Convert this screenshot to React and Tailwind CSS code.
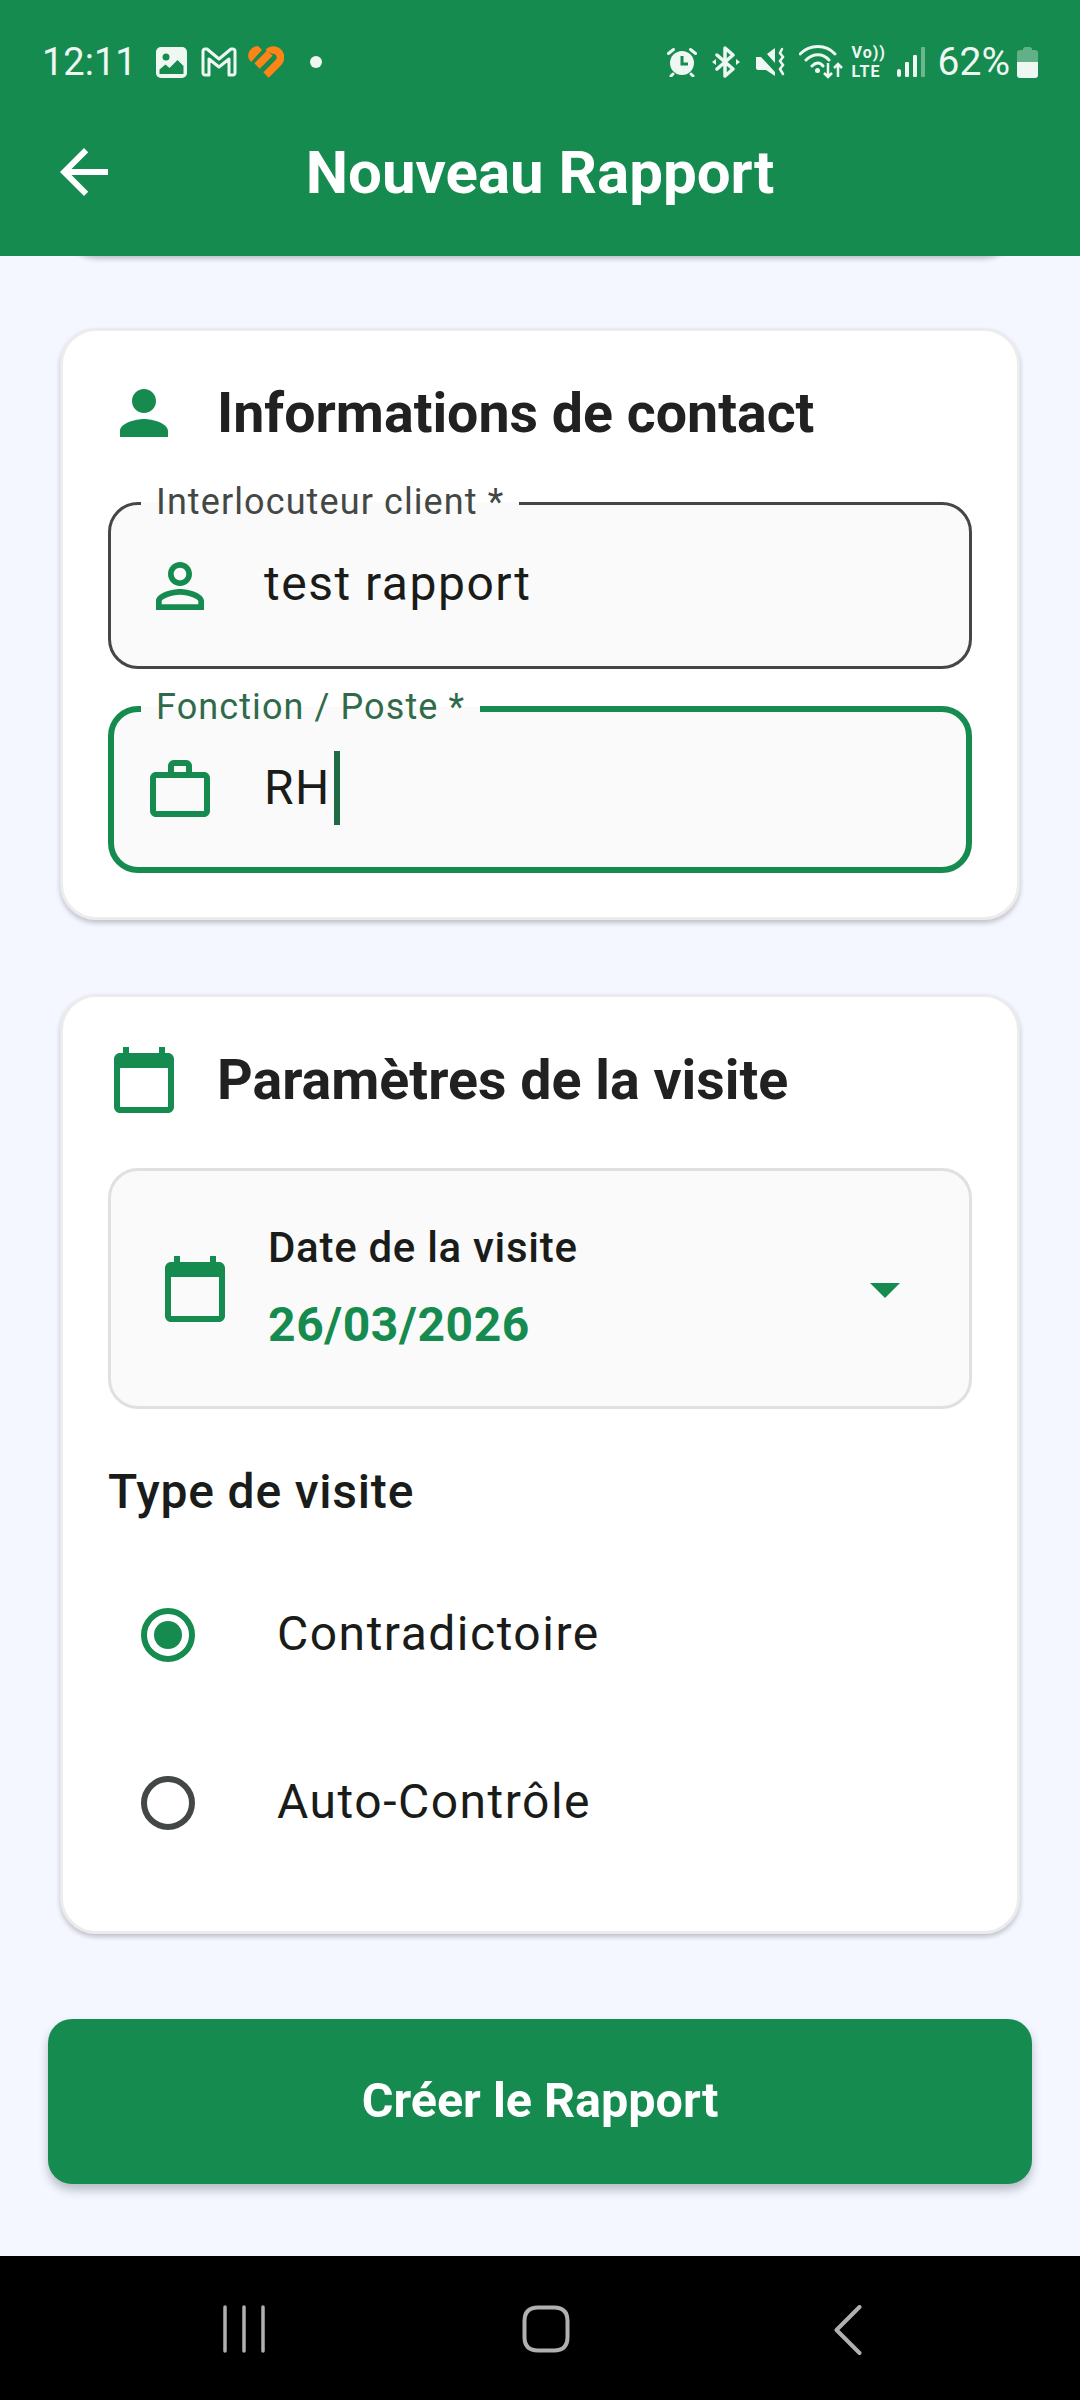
import React from "react";

const StatusIcons = () => (
  <div className="flex items-center">
    {/* alarm */}
    <svg width="30" height="30" viewBox="0 0 30 30">
      <circle cx="15" cy="16" r="12" fill="#eef7f2" />
      <path d="M15 9v8h6" stroke="#168b4f" strokeWidth="3" fill="none" />
      <path d="M1.500 6.500 6.500 2.500M28.500 6.500 23.500 2.500M6 27l-2 2M24 27l2 2" stroke="#eef7f2" strokeWidth="3" strokeLinecap="round" />
    </svg>
    {/* bluetooth */}
    <svg width="28" height="32" viewBox="0 0 28 32" className="ml-[15px]">
      <path d="M5 9 21 23 13 30V2l8 7L5 23" stroke="#eef7f2" strokeWidth="3.500" fill="none" strokeLinejoin="round" strokeLinecap="round" />
      <path d="M0 16l4-3v6zM28 16l-4-3v6z" fill="#eef7f2" />
    </svg>
    {/* mute + vibrate */}
    <svg width="30" height="32" viewBox="0 0 30 32" className="ml-[15px]">
      <path d="M1 11h5l14 15v4l-9-6H3c-1 0-2-1-2-2zM12 8l8-6v15z" fill="#eef7f2" />
      <path d="M1 2 21 25" stroke="#168b4f" strokeWidth="2" />
      <path d="M27 3l-2 4 3 4-3 4 3 4-3 4 3 5" stroke="#eef7f2" strokeWidth="2.500" fill="none" strokeLinecap="round" />
    </svg>
    {/* wifi */}
    <svg width="44" height="34" viewBox="0 0 44 34" className="ml-[14px]">
      <path d="M1 9C11-1 27-1 36 9M7 15c7-7 17-7 23 0M13 21c4-4 8-4 11 0" stroke="#eef7f2" strokeWidth="3" fill="none" strokeLinecap="round" />
      <circle cx="18.500" cy="25.500" r="2.500" fill="#eef7f2" />
      <path d="M29 18v14M25 28l4 4 4-4M39 32V19M35 23l4-4 4 4" stroke="#eef7f2" strokeWidth="2.500" fill="none" />
    </svg>
    {/* volte */}
    <div className="ml-[9px] flex w-[32px] flex-col items-start text-[16px] font-bold leading-[19px] tracking-[1px] text-[#eef7f2]">
      <span>Vo))</span>
      <span>LTE</span>
    </div>
    {/* signal */}
    <svg width="28" height="30" viewBox="0 0 28 30" className="ml-[13px]">
      <rect x="0" y="22" width="4" height="8" rx="2" fill="#eef7f2" />
      <rect x="8" y="15" width="4" height="15" rx="1" fill="#eef7f2" />
      <rect x="16" y="8" width="4" height="22" rx="1" fill="#eef7f2" />
      <rect x="24" y="0" width="4" height="30" rx="1" fill="#eef7f2" opacity="0.4" />
    </svg>
    <span className="ml-[13px] text-[39px] leading-[52px]">62%</span>
    {/* battery */}
    <svg width="21" height="32" viewBox="0 0 21 32" className="ml-[7px]">
      <path d="M6 3c0-1 1-2 2-2h5c1 0 2 1 2 2v1h3c2 0 3 1 3 3v9H0V7c0-2 1-3 3-3h3z" fill="#eef7f2" opacity="0.35" />
      <path d="M0 16h21v13c0 2-1 3-3 3H3c-2 0-3-1-3-3z" fill="#eef7f2" />
    </svg>
  </div>
);

const AppIcons = () => (
  <div className="ml-[19px] flex items-center">
    <svg width="31" height="31" viewBox="0 0 31 31">
      <rect width="31" height="31" rx="5" fill="#eef7f2" />
      <circle cx="10" cy="10" r="3.500" fill="#168b4f" />
      <path d="M3.500 27v-4.500l6-5 4 3.500 8-8 6 6V27z" fill="#168b4f" />
    </svg>
    <svg width="36" height="30" viewBox="0 0 36 30" className="ml-[14px]">
      <path d="M2 4c0-1 1-2 2-2h2l12 10L30 2h2c1 0 2 1 2 2v22c0 1-1 2-2 2h-4V12l-10 8-10-8v16H4c-1 0-2-1-2-2z" fill="none" stroke="#eef7f2" strokeWidth="3" strokeLinejoin="round" />
    </svg>
    <svg width="36" height="32" viewBox="0 0 36 32" className="ml-[11px]">
      <path d="M1 13C-2 7 4 0 10 0l4 4L3 16z" fill="#ff8418" />
      <path d="M9 20 22 7" stroke="#ff8418" strokeWidth="7.500" />
      <path d="M18 29 30 17c5-5 2-12-4-13-2 0-4 0-5 2" stroke="#ff8418" strokeWidth="7.500" fill="none" />
    </svg>
    <span className="ml-[26px] h-[12px] w-[12px] rounded-full bg-[#eef7f2]" />
  </div>
);

const PersonFilled = () => (
  <svg width="72" height="72" viewBox="0 0 24 24" fill="#168b4f">
    <path d="M12 12c2.210 0 4-1.790 4-4s-1.790-4-4-4-4 1.790-4 4 1.790 4 4 4zm0 2c-2.670 0-8 1.340-8 4v2h16v-2c0-2.660-5.330-4-8-4z" />
  </svg>
);

const PersonOutline = () => (
  <svg width="72" height="72" viewBox="0 0 24 24" fill="#168b4f">
    <path d="M12 5.900c1.160 0 2.100.94 2.100 2.100s-.94 2.100-2.100 2.100S9.900 9.160 9.900 8s.94-2.100 2.100-2.100m0 9c2.970 0 6.100 1.460 6.100 2.100v1.100H5.900V17c0-.64 3.130-2.100 6.100-2.100M12 4C9.790 4 8 5.790 8 8s1.790 4 4 4 4-1.790 4-4-1.790-4-4-4zm0 9c-2.670 0-8 1.340-8 4v3h16v-3c0-2.660-5.330-4-8-4z" />
  </svg>
);

const WorkOutline = () => (
  <svg width="72" height="72" viewBox="0 0 24 24" fill="#168b4f">
    <path d="M14 6V4h-4v2h4zM4 8v11h16V8H4zm16-2c1.110 0 2 .89 2 2v11c0 1.110-.89 2-2 2H4c-1.110 0-2-.89-2-2l.01-11c0-1.110.88-2 1.990-2h4V4c0-1.110.89-2 2-2h4c1.110 0 2 .89 2 2v2h4z" />
  </svg>
);

const Calendar = () => (
  <svg width="72" height="72" viewBox="0 0 24 24" fill="#168b4f">
    <path d="M20 3h-1V1h-2v2H7V1H5v2H4c-1.100 0-2 .9-2 2v16c0 1.100.9 2 2 2h16c1.100 0 2-.9 2-2V5c0-1.100-.9-2-2-2zm0 18H4V8h16v13z" />
  </svg>
);

const Card = ({ className, children }) => (
  <section className={`mx-[12px] rounded-[36px] border-[3px] border-[#ececec] bg-white shadow-[0_3px_5px_rgba(0,0,0,0.22)] ${className}`}>
    {children}
  </section>
);

const CardTitle = ({ icon, children }) => (
  <div className="flex h-[72px] items-center">
    {icon}
    <h2 className="ml-[37px] pt-[2px] text-[55.5px] font-bold leading-none text-[#212121]">{children}</h2>
  </div>
);

const Field = ({ label, icon, focused, children, className }) => (
  <div
    className={`relative flex h-[167px] items-center rounded-[30px] bg-[#fafafa] ${
      focused ? "border-[6px] border-[#168b4f]" : "border-[3px] border-[#444845]"
    } ${className}`}
  >
    <span
      className={`absolute bg-[linear-gradient(#ffffff_50%,#fafafa_50%)] px-[15px] text-[36px] leading-[42px] tracking-[1.1px] ${
        focused ? "left-[27px] top-[-26px] text-[#2f6b4a]" : "left-[30px] top-[-24px] text-[#444845]"
      }`}
    >
      {label}
    </span>
    <div className={`flex items-center ${focused ? "ml-[30px]" : "ml-[33px]"}`}>
      {icon}
      <div className="mb-[4px] ml-[48px] flex items-center text-[48px] leading-[56px] tracking-[1.5px] text-[#1a1c1a]">{children}</div>
    </div>
  </div>
);

const Radio = ({ checked, label }) => (
  <div className="flex h-[168px] items-center pl-[33px]">
    <span
      className={`flex h-[54px] w-[54px] items-center justify-center rounded-full border-[6px] ${
        checked ? "border-[#168b4f]" : "border-[#444845]"
      }`}
    >
      {checked && <span className="h-[28px] w-[28px] rounded-full bg-[#168b4f]" />}
    </span>
    <span className="mb-[2px] ml-[82px] text-[48px] leading-[56px] tracking-[1.5px] text-[#1a1c1a]">{label}</span>
  </div>
);

export default function App() {
  return (
    <div className="flex h-[2400px] w-[1080px] flex-col overflow-hidden bg-[#f4f7ff] font-['Roboto',sans-serif]">
      <header className="relative z-10 h-[256px] bg-[#168b4f]">
        <div className="flex h-[88px] items-start justify-between pl-[42px] pr-[42px] pt-[36px] text-[#eef7f2]">
          <div className="flex h-[52px] items-center">
            <span className="text-[38px] leading-[52px]">12:11</span>
            <AppIcons />
          </div>
          <StatusIcons />
        </div>
        <div className="flex h-[168px] items-center pl-[48px]">
          <svg width="72" height="72" viewBox="0 0 24 24" fill="#ffffff">
            <path d="M20 11H7.830l5.590-5.590L12 4l-8 8 8 8 1.410-1.410L7.830 13H20v-2z" />
          </svg>
          <h1 className="flex-1 pr-[120px] pt-[2px] text-center text-[60px] font-bold leading-none text-white">Nouveau Rapport</h1>
        </div>
      </header>

      <main className="flex-1 px-[48px]">
        {/* bottom edge of the card scrolled under the app bar */}
        <div className="mx-[13px] -mt-[36px] h-[36px] rounded-b-[36px] bg-white shadow-[0_3px_5px_rgba(0,0,0,0.22)]" />

        <Card className="mt-[72px] h-[592px] px-[45px] pt-[46px]">
          <CardTitle icon={<PersonFilled />}>Informations de contact</CardTitle>
          <Field className="mt-[53px]" label="Interlocuteur client *" icon={<PersonOutline />}>
            test rapport
          </Field>
          <Field className="mt-[37px]" label="Fonction / Poste *" icon={<WorkOutline />} focused>
            RH
            <span className="ml-[3px] h-[74px] w-[6px] bg-[#1f6b45]" />
          </Field>
        </Card>

        <Card className="mt-[74px] h-[940px] px-[45px] pt-[47px]">
          <CardTitle icon={<Calendar />}>Paramètres de la visite</CardTitle>
          <div className="mt-[52px] flex h-[241px] items-center rounded-[30px] border-[3px] border-[#e0e0e0] bg-[#fafafa] pl-[48px] pr-[48px]">
            <Calendar />
            <div className="ml-[37px] flex-1">
              <p className="text-[42px] font-medium leading-[47px] tracking-[0.7px] text-[#1a1c1a]">Date de la visite</p>
              <p className="mt-[26px] text-[48px] font-bold leading-[56px] tracking-[0.6px] text-[#168b4f]">26/03/2026</p>
            </div>
            <svg width="72" height="72" viewBox="0 0 24 24" fill="#168b4f">
              <path d="M7 10l5 5 5-5z" />
            </svg>
          </div>
          <h3 className="mt-[56px] text-[48px] font-medium leading-[54px] tracking-[0.8px] text-[#1a1c1a]">Type de visite</h3>
          <div className="mt-[32px]">
            <Radio checked label="Contradictoire" />
            <Radio label="Auto-Contrôle" />
          </div>
        </Card>

        <button className="mt-[85px] flex h-[165px] w-[984px] items-center justify-center rounded-[24px] bg-[#168b4f] text-[48.500px] font-bold text-white shadow-[0_6px_10px_rgba(40,50,70,0.3)]">
          Créer le Rapport
        </button>
      </main>

      <nav className="flex h-[144px] items-start bg-black pl-[223px] pt-[49px]">
        <svg width="42" height="48" viewBox="0 0 42 48">
          <path d="M2 2v44M21 2v44M40 2v44" stroke="#b0b0b0" strokeWidth="3.500" strokeLinecap="round" />
        </svg>
        <svg width="48" height="48" viewBox="0 0 48 48" className="ml-[257px]">
          <path d="M16 2.500h16C41 2.500 45.500 7 45.500 16v16c0 9-4.500 13.500-13.500 13.500H16C7 45.500 2.500 41 2.500 32V16C2.500 7 7 2.500 16 2.500z" fill="none" stroke="#b0b0b0" strokeWidth="4" />
        </svg>
        <svg width="28" height="50" viewBox="0 0 28 50" className="ml-[264px]">
          <path d="M25.500 2 2.500 25l23 23" fill="none" stroke="#b0b0b0" strokeWidth="4" strokeLinecap="round" strokeLinejoin="round" />
        </svg>
      </nav>
    </div>
  );
}
